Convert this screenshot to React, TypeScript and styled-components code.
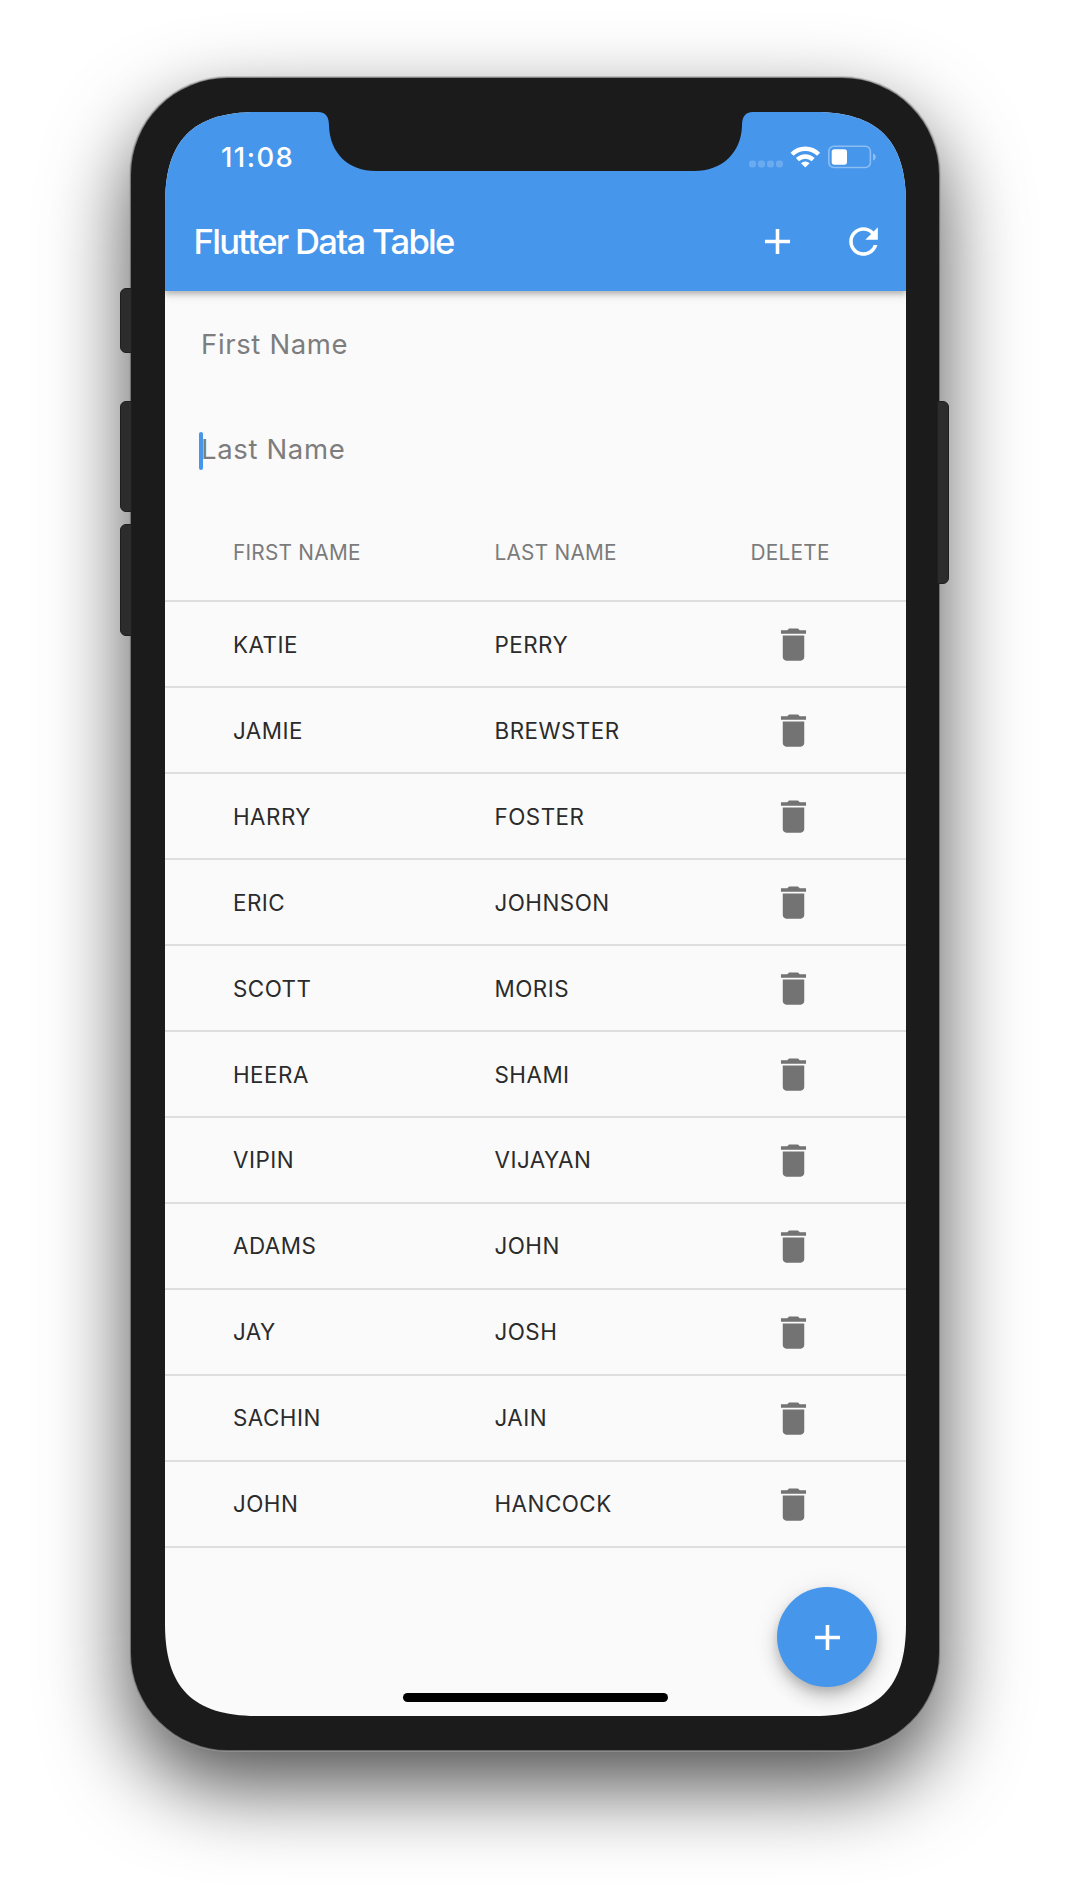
import React from "react";
import styled, { createGlobalStyle } from "styled-components";

const BLUE = "#4696ec";
const BODY = "#1b1b1b";

const GlobalStyle = createGlobalStyle`
  *, *::before, *::after { box-sizing: border-box; }
  html, body { margin: 0; background: #fff; }
  body { font-family: Inter, "Liberation Sans", sans-serif; -webkit-font-smoothing: antialiased; }
`;

const Page = styled.main`
  display: flex;
  width: 1070px;
  height: 1900px;
  padding: 78px 0 0 131px;
  background: #fff;
  overflow: hidden;
`;

const Phone = styled.div`
  position: relative;
  width: 808px;
  height: 1672px;
  padding: 34px 33px 34px 34px;
  border-radius: 97px;
  background: ${BODY};
  box-shadow: 0 0 0 1px rgba(60, 60, 60, 0.45), 0 0 0 2px rgba(160, 160, 160, 0.55),
    0 35px 84px rgba(0, 0, 0, 0.7);
`;

const SideButton = styled.span<{ $side: "left" | "right"; $top: number; $height: number }>`
  position: absolute;
  ${(p) => p.$side}: ${(p) => (p.$side === "left" ? -11 : -10)}px;
  top: ${(p) => p.$top}px;
  width: 12px;
  height: ${(p) => p.$height}px;
  border: 1px solid #1f1f1f;
  border-radius: ${(p) => (p.$side === "left" ? "6px 0 0 6px" : "0 6px 6px 0")};
  background: #2c2c2c;
`;

const Screen = styled.div`
  position: relative;
  display: flex;
  flex-direction: column;
  width: 741px;
  height: 1604px;
  background: #fafafa;
  clip-path: path(
    "M0 92C0 28 28 0 92 0H649C713 0 741 28 741 92V1512C741 1576 713 1604 649 1604H92C28 1604 0 1576 0 1512Z"
  );
`;

const Notch = styled.svg`
  position: absolute;
  left: 153px;
  top: -1px;
  width: 435px;
  height: 60px;
`;

const Header = styled.header`
  display: flex;
  flex-direction: column;
  flex: none;
  height: 179px;
  background: ${BLUE};
  color: #fff;
  box-shadow: 0 3px 5px rgba(0, 0, 0, 0.2), 0 5px 9px rgba(0, 0, 0, 0.1);
`;

const StatusBar = styled.div`
  display: flex;
  align-items: center;
  justify-content: space-between;
  height: 79px;
  padding: 10px 30px 0 56px;
`;

const Clock = styled.span`
  font-size: 27.4px;
  font-weight: 550;
  line-height: 34px;
  letter-spacing: 1.45px;
`;

const StatusIcons = styled.div`
  display: flex;
  align-items: center;
`;

const Toolbar = styled.div`
  display: flex;
  align-items: center;
  justify-content: space-between;
  height: 100px;
  padding: 0 21px 0 28.5px;
`;

const Title = styled.h1`
  margin: 0;
  font-size: 34.6px;
  font-weight: 550;
  line-height: 44px;
  letter-spacing: -1.68px;
`;

const Actions = styled.div`
  display: flex;
  gap: 43px;
`;

const IconButton = styled.button`
  display: flex;
  padding: 0;
  border: 0;
  background: none;
  color: inherit;
`;

const Form = styled.form`
  display: flex;
  flex-direction: column;
  flex: none;
  height: 209px;
`;

const Field = styled.label`
  display: flex;
  align-items: center;
  height: 105.5px;
  padding: 1.5px 0 0 34px;
  color: #7d7d7d;
`;

const Caret = styled.span`
  width: 4px;
  height: 38px;
  margin: 4px -4px 0 0;
  border-radius: 2px;
  background: ${BLUE};
`;

const Placeholder = styled.span`
  font-size: 27.5px;
  font-weight: 375;
  line-height: 36px;
  letter-spacing: 0.65px;
  padding-left: 2px;
`;

const Row = styled.div<{ $head?: boolean }>`
  display: grid;
  grid-template-columns: 261.5px 256px 1fr;
  align-items: center;
  flex: none;
  height: ${(p) => (p.$head ? 102.4 : 85.95)}px;
  padding: ${(p) => (p.$head ? "5px" : "0")} 0 0 68px;
  border-bottom: 2px solid #dedede;
  color: ${(p) => (p.$head ? "#7b7b7b" : "#2b2b2b")};
  font-size: ${(p) => (p.$head ? 20.8 : 22.4)}px;
  font-weight: ${(p) => (p.$head ? 400 : 375)};
  letter-spacing: ${(p) => (p.$head ? 0.25 : 0.48)}px;
`;

const DeleteButton = styled(IconButton)`
  margin-left: 21px;
  padding-top: 1px;
  color: #737373;
`;

const Fab = styled.button`
  position: absolute;
  right: 29px;
  bottom: 29px;
  display: flex;
  align-items: center;
  justify-content: center;
  width: 100px;
  height: 100px;
  padding: 0;
  border: 0;
  border-radius: 50%;
  background: ${BLUE};
  color: #fff;
  box-shadow: 0 5px 9px rgba(0, 0, 0, 0.12), 0 11px 18px rgba(0, 0, 0, 0.16),
    0 2px 28px rgba(0, 0, 0, 0.08);
`;

const HomeIndicator = styled.span`
  position: absolute;
  left: 238px;
  bottom: 14px;
  width: 265px;
  height: 9px;
  border-radius: 5px;
  background: #000;
`;

const GLYPHS = {
  add: "M19 13h-6v6h-2v-6H5v-2h6V5h2v6h6v2z",
  refresh:
    "M17.65 6.35C16.2 4.9 14.21 4 12 4c-4.42 0-7.99 3.58-7.99 8s3.57 8 7.99 8c3.73 0 6.84-2.55 7.73-6h-2.08c-.82 2.33-3.04 4-5.65 4-3.31 0-6-2.69-6-6s2.69-6 6-6c1.66 0 3.14.69 4.22 1.78L13 11h7V4l-2.35 2.35z",
  trash: "M6 19c0 1.1.9 2 2 2h8c1.1 0 2-.9 2-2V7H6v12zM19 4h-3.5l-1-1h-5l-1 1H5v2h14V4z",
};

const Glyph = ({ name }: { name: keyof typeof GLYPHS }) => (
  <svg width="43" height="43" viewBox="0 0 24 24" fill="currentColor" aria-hidden="true">
    <path d={GLYPHS[name]} />
  </svg>
);

const StatusGlyphs = () => (
  <StatusIcons>
    <svg width="128" height="24" viewBox="748 144.5 128 24" fill="#fff" aria-hidden="true">
      {[749, 758, 767, 776].map((x) => (
        <rect key={x} x={x} y="160" width="7" height="7" rx="2.4" opacity="0.2" />
      ))}
      <g fill="none" stroke="#fff" strokeWidth="4.4">
        <path d="M792 153.7a19 19 0 0 1 26.6 0" />
        <path d="M797.4 159.2a11.4 11.4 0 0 1 15.8 0" />
      </g>
      <path d="M805.3 167l-4.3-4.3a6.2 6.2 0 0 1 8.6 0z" />
      <rect x="828.8" y="145.8" width="41.6" height="21.2" rx="5" fill="none" stroke="#fff" strokeWidth="1.6" opacity="0.38" />
      <rect x="831.7" y="148.7" width="15.3" height="15.5" rx="2.6" />
      <path d="M873 153c3.6 1 3.6 5.8 0 7z" opacity="0.4" />
    </svg>
  </StatusIcons>
);

const PEOPLE: [string, string][] = [
  ["KATIE", "PERRY"],
  ["JAMIE", "BREWSTER"],
  ["HARRY", "FOSTER"],
  ["ERIC", "JOHNSON"],
  ["SCOTT", "MORIS"],
  ["HEERA", "SHAMI"],
  ["VIPIN", "VIJAYAN"],
  ["ADAMS", "JOHN"],
  ["JAY", "JOSH"],
  ["SACHIN", "JAIN"],
  ["JOHN", "HANCOCK"],
];

export default function App() {
  return (
    <>
      <GlobalStyle />
      <Page>
        <Phone>
          <SideButton $side="left" $top={210} $height={65} />
          <SideButton $side="left" $top={323} $height={111} />
          <SideButton $side="left" $top={446} $height={112} />
          <SideButton $side="right" $top={323} $height={183} />
          <Screen>
            <Header>
              <StatusBar>
                <Clock>11:08</Clock>
                <StatusGlyphs />
              </StatusBar>
              <Toolbar>
                <Title>Flutter Data Table</Title>
                <Actions>
                  <IconButton aria-label="Add"><Glyph name="add" /></IconButton>
                  <IconButton aria-label="Refresh"><Glyph name="refresh" /></IconButton>
                </Actions>
              </Toolbar>
            </Header>
            <Form>
              <Field><Placeholder>First Name</Placeholder></Field>
              <Field><Caret /><Placeholder>Last Name</Placeholder></Field>
            </Form>
            <Row $head>
              <span>FIRST NAME</span>
              <span>LAST NAME</span>
              <span>DELETE</span>
            </Row>
            {PEOPLE.map(([first, last]) => (
              <Row key={first}>
                <span>{first}</span>
                <span>{last}</span>
                <DeleteButton aria-label="Delete"><Glyph name="trash" /></DeleteButton>
              </Row>
            ))}
            <Notch viewBox="318 111 435 60" aria-hidden="true">
              <path
                fill={BODY}
                d="M318 111V112C326 112 329 117 329 126C330 153 348 171 376 171H694C722 171 741 153 742 126C742 117 745 112 753 112V111Z"
              />
            </Notch>
            <HomeIndicator />
            <Fab aria-label="Add person"><Glyph name="add" /></Fab>
          </Screen>
        </Phone>
      </Page>
    </>
  );
}
